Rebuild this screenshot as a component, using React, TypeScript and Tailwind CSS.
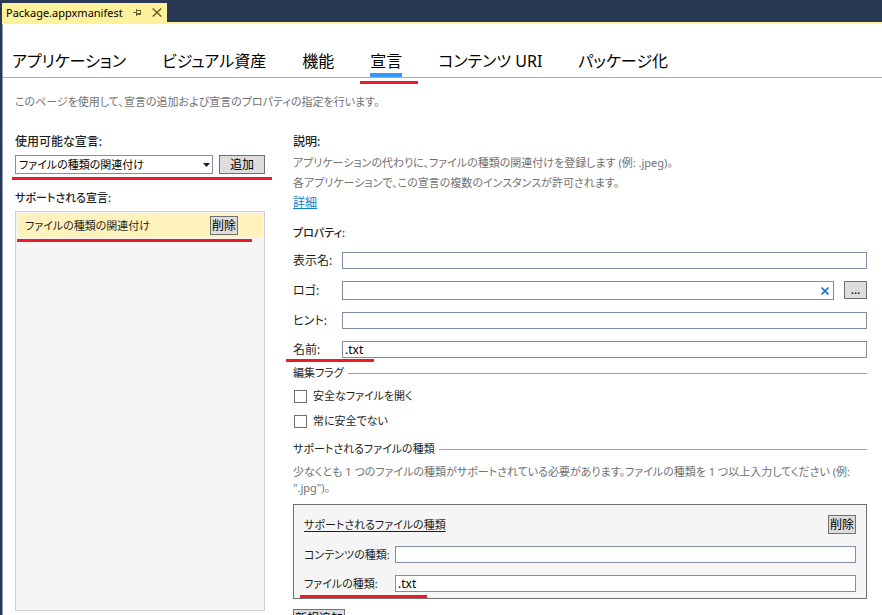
import type { ReactNode } from "react";

const tabs = ["アプリケーション", "ビジュアル資産", "機能", "宣言", "コンテンツ URI", "パッケージ化"];

const inputClass = "h-[17px] min-w-0 flex-1 border border-[#828fa3] bg-white px-0.5 text-xs leading-4 text-black outline-none";
const buttonClass = "shrink-0 border border-[#707070] bg-[#dddddd] text-center text-xs leading-4 text-black";

function Mark({ className }: { className: string }) {
    return <span aria-hidden="true" className={`pointer-events-none absolute z-10 h-[3px] bg-[#ed1c24] ${className}`} />;
}

function PinIcon() {
    return (
        <svg width="9" height="9" viewBox="0 0 9 9" fill="none" stroke="#6b6238" shapeRendering="crispEdges">
            <path d="M0 4.5H3M3.5 1V8M4 2.5H8M7.5 2V7M4 5.5H8M4 6.5H8" />
        </svg>
    );
}

function CloseIcon() {
    return (
        <svg width="10" height="9" viewBox="0 0 10 9" fill="none" stroke="#6b6238" strokeWidth="1.5">
            <path d="M0.7 0.5L9.3 8.5M9.3 0.5L0.7 8.5" />
        </svg>
    );
}

function Field({ id, label, value = "", labelClass = "w-[49px] text-xs" }: { id: string; label: string; value?: string; labelClass?: string }) {
    return (
        <div className="flex h-[17px] items-center">
            <label htmlFor={id} className={`shrink-0 whitespace-nowrap ${labelClass}`}>{label}</label>
            <input id={id} defaultValue={value} className={inputClass} />
        </div>
    );
}

function SectionTitle({ children }: { children: ReactNode }) {
    return (
        <h3 className="flex items-center gap-1">
            {children}
            <span className="h-px flex-1 bg-[#a0a0a0]" />
        </h3>
    );
}

function Check({ label }: { label: string }) {
    return (
        <label className="flex items-center gap-1.5 pl-px">
            <input type="checkbox" className="size-[13px] appearance-none border border-[#707070] bg-white checked:bg-[#3399ff]" />
            {label}
        </label>
    );
}

function Declarations() {
    return (
        <section className="flex w-[250px] shrink-0 flex-col">
            <label htmlFor="available" className="text-xs font-medium">使用可能な宣言:</label>
            <div className="relative mt-[5px] flex gap-1.5">
                <div className="relative flex-1">
                    <select id="available" className="block h-[19px] w-full appearance-none border border-[#828fa3] bg-white px-[3px] leading-4 text-black outline-none">
                        <option>ファイルの種類の関連付け</option>
                    </select>
                    <svg width="7" height="4" viewBox="0 0 7 4" className="pointer-events-none absolute top-2 right-[3px]">
                        <path d="M0 0H7L3.5 4Z" fill="#1e1e1e" />
                    </svg>
                </div>
                <button className={`h-[19px] w-[46px] ${buttonClass}`}>追加</button>
                <Mark className="top-[22px] -right-[7px] -left-[3px]" />
            </div>
            <h2 className="mt-4 font-medium">サポートされる宣言:</h2>
            <div className="mt-[5px] flex-1 border border-[#ccccdb] bg-[#f5f5f5] p-px">
                <div className="relative flex h-[25px] items-center justify-between bg-[#fff2bd] pr-[25px] pl-2">
                    ファイルの種類の関連付け
                    <button className={`h-[19px] w-7 ${buttonClass}`}>削除</button>
                    <Mark className="top-[26px] right-[11px] left-0" />
                </div>
            </div>
        </section>
    );
}

function Properties() {
    return (
        <section className="min-w-0 flex-1">
            <h2 className="text-xs font-medium">説明:</h2>
            <div className="mt-[3px] leading-5 text-[#717171]">
                <p>アプリケーションの代わりに、ファイルの種類の関連付けを登録します (例: .jpeg)。</p>
                <p>各アプリケーションで、この宣言の複数のインスタンスが許可されます。</p>
                <a href="#" className="block w-fit text-xs leading-5 text-[#0e80cc] underline">詳細</a>
            </div>
            <h2 className="mt-3 font-medium">プロパティ:</h2>

            <div className="mt-[11px] flex flex-col gap-3">
                <Field id="display-name" label="表示名:" />
                <div className="flex items-center">
                    <label htmlFor="logo" className="w-[49px] shrink-0 text-xs">ロゴ:</label>
                    <div className="flex h-[19px] min-w-0 flex-1 items-center border border-[#828fa3] pr-1">
                        <input id="logo" className="h-full min-w-0 flex-1 px-0.5 text-xs outline-none" />
                        <button aria-label="クリア">
                            <svg width="8" height="8" viewBox="0 0 8 8" stroke="#1979ca" strokeWidth="1.7">
                                <path d="M0.5 0.5L7.5 7.5M7.5 0.5L0.5 7.5" />
                            </svg>
                        </button>
                    </div>
                    <button className={`ml-2.5 h-[18px] w-[23px] self-start ${buttonClass}`}>...</button>
                </div>
                <Field id="hint" label="ヒント:" />
                <div className="relative">
                    <Field id="name" label="名前:" value=".txt" />
                    <Mark className="top-[18px] -left-[7px] w-[88px]" />
                </div>
            </div>

            <div className="mt-[7px]">
                <SectionTitle>編集フラグ</SectionTitle>
            </div>
            <div className="mt-[7px] flex flex-col gap-[9px]">
                <Check label="安全なファイルを開く" />
                <Check label="常に安全でない" />
            </div>

            <div className="mt-3">
                <SectionTitle>サポートされるファイルの種類</SectionTitle>
            </div>
            <p className="mt-[7px] text-[#717171]">
                少なくとも 1 つのファイルの種類がサポートされている必要があります。ファイルの種類を 1 つ以上入力してください (例: ".jpg")。
            </p>

            <div className="relative mt-2 flex flex-col gap-3 border border-[#707070] bg-[#f5f5f5] px-2.5 pt-2.5 pb-1.5">
                <div className="flex items-center justify-between">
                    <h4 className="underline underline-offset-2">サポートされるファイルの種類</h4>
                    <button className={`h-[19px] w-7 ${buttonClass}`}>削除</button>
                </div>
                <Field id="content-type" label="コンテンツの種類:" labelClass="w-[91px]" />
                <Field id="file-type" label="ファイルの種類:" value=".txt" labelClass="w-[91px]" />
                <Mark className="bottom-0 left-1.5 w-[127px]" />
            </div>
            <button className={`mt-2.5 h-[19px] w-[52px] ${buttonClass}`}>新規追加</button>
        </section>
    );
}

export default function App() {
    return (
        <div className="flex h-screen flex-col overflow-hidden bg-[#293955] pl-0.5 font-['Noto_Sans','Noto_Sans_CJK_JP',sans-serif] text-[11px] leading-4 text-[#1e1e1e] [font-feature-settings:'palt']">
            <div className="flex border-b-2 border-[#fff29d] pt-[3px]">
                <div className="flex h-[19px] items-center gap-2.5 bg-[#fff29d] pr-[5px] pl-1">
                    <span className="text-black">Package.appxmanifest</span>
                    <button aria-label="ピン留め"><PinIcon /></button>
                    <button aria-label="閉じる"><CloseIcon /></button>
                </div>
            </div>

            <main className="flex min-h-0 flex-1 flex-col border-l border-[#8e9bbc] bg-white">
                <nav className="flex gap-9 border-b border-[#adadad] pt-[25px] pl-[9px] text-base leading-6 text-black">
                    {tabs.map((tab) => (
                        <a key={tab} href="#" className={`relative border-b-4 whitespace-nowrap ${tab === "宣言" ? "border-[#3399ff]" : "border-transparent"}`}>
                            {tab}
                            {tab === "宣言" && <Mark className="top-8 -right-4 -left-2.5" />}
                        </a>
                    ))}
                </nav>
                <p className="mt-4 pl-3 text-[#717171]">このページを使用して、宣言の追加および宣言のプロパティの指定を行います。</p>
                <div className="mt-6 flex min-h-0 flex-1 gap-7 pr-[15px] pb-1 pl-3">
                    <Declarations />
                    <Properties />
                </div>
            </main>
        </div>
    );
}
